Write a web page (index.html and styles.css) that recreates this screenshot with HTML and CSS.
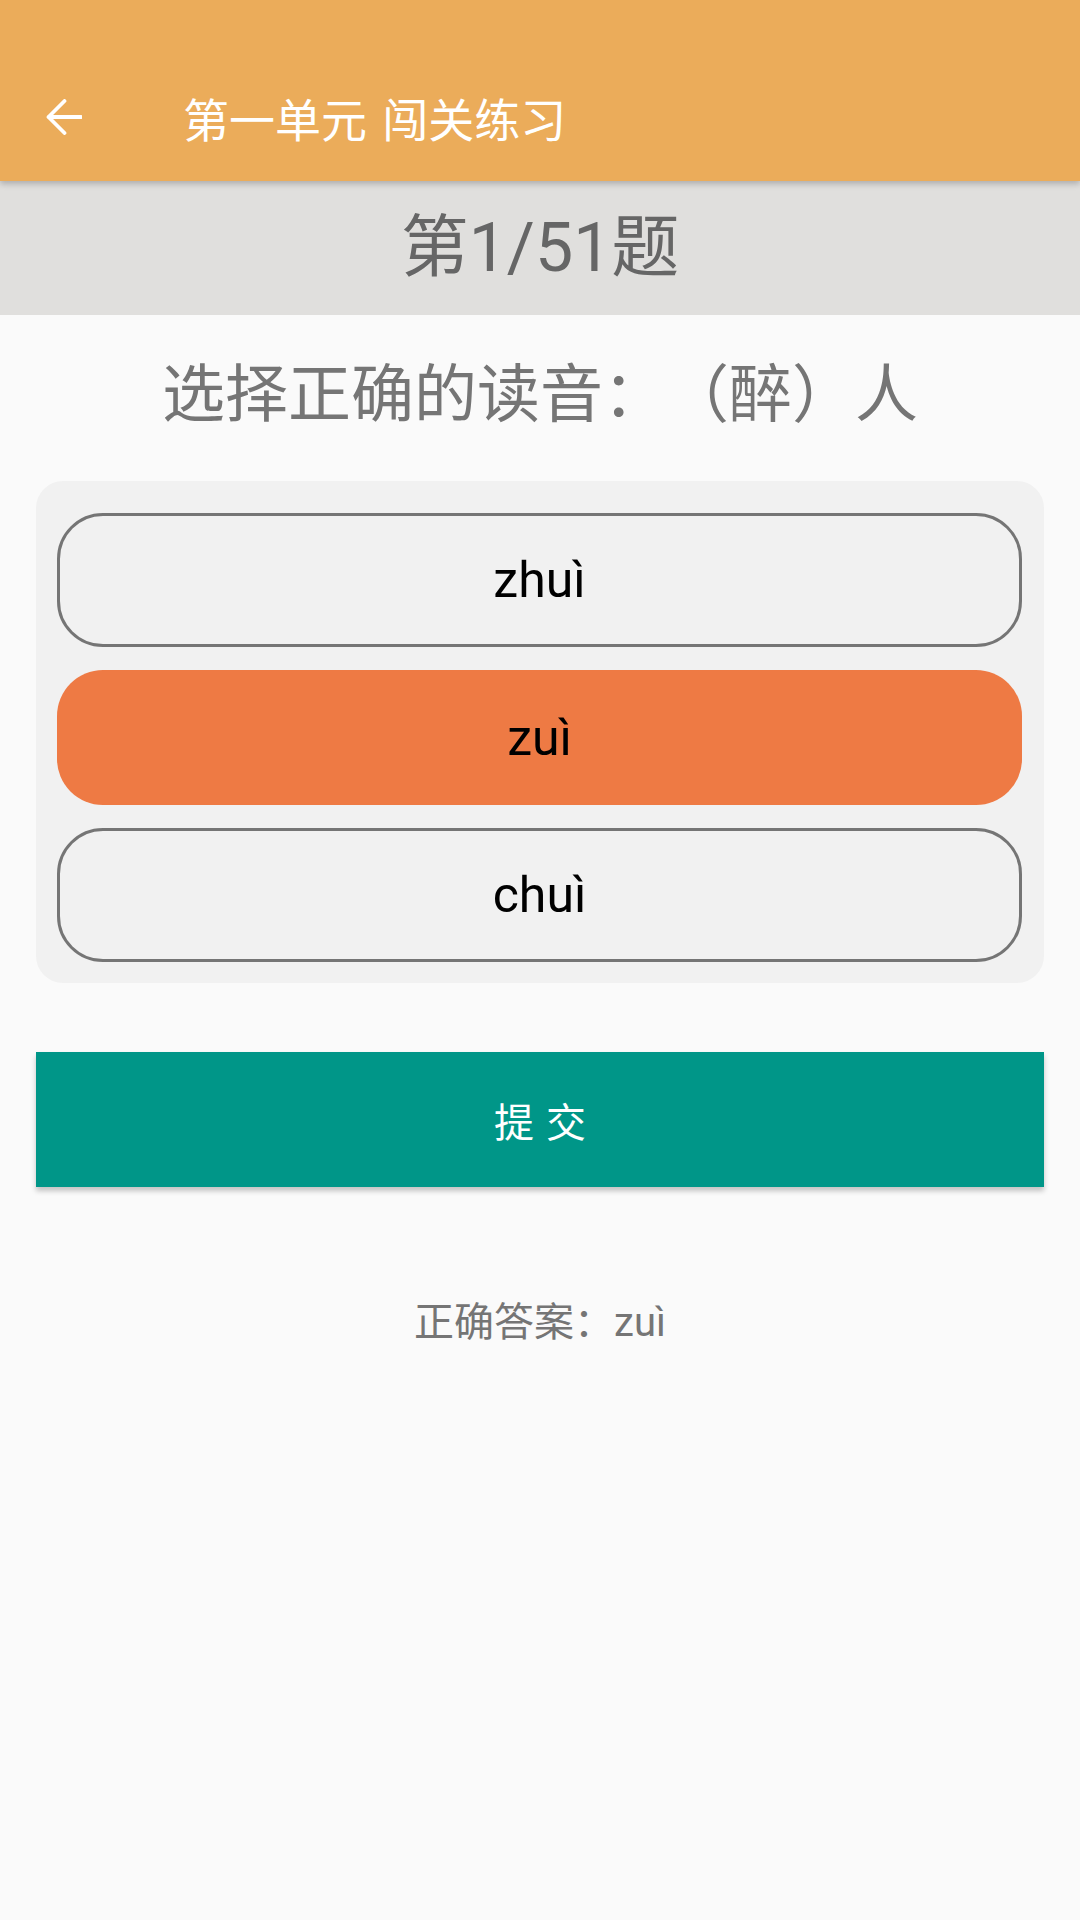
FILE: index.html
```html
<!DOCTYPE html>
<html lang="zh-CN">
<head>
<meta charset="utf-8">
<title>第一单元 闯关练习</title>
<link rel="stylesheet" href="styles.css">
</head>
<body>
<header class="appbar">
  <div class="toolbar">
    <svg class="back" viewBox="0 0 36 36" width="36" height="36" aria-hidden="true">
      <path d="M35 18 H2.5 M18.5 2 L2.5 18 L18.5 34" fill="none" stroke="#fff" stroke-width="3.8" stroke-linecap="round" stroke-linejoin="round"/>
    </svg>
    <h1 class="title">第一单元 闯关练习</h1>
  </div>
</header>
<div class="counter">第1/51题</div>
<main class="content">
  <p class="question">选择正确的读音：（醉）人</p>
  <div class="options">
    <div class="option">zhuì</div>
    <div class="option selected">zuì</div>
    <div class="option">chuì</div>
  </div>
  <div class="submit">提交</div>
  <p class="answer">正确答案：zuì</p>
</main>
</body>
</html>
```

FILE: styles.css
```css
* { box-sizing: border-box; }

html, body {
  margin: 0;
  padding: 0;
}

body {
  width: 1080px;
  min-height: 1920px;
  background: #fafafa;
  font-family: Roboto, "Noto Sans CJK SC", sans-serif;
  text-spacing-trim: space-all;
}

.appbar {
  position: relative;
  z-index: 2;
  height: 181px;
  padding-top: 53px;
  background: #ebac5a;
  box-shadow: 0 3px 6px rgba(0, 0, 0, 0.22);
}

.toolbar {
  height: 128px;
  display: flex;
  align-items: center;
  padding-left: 46px;
}

.back {
  display: block;
  flex: none;
}

.title {
  margin: 0 0 0 101px;
  font-family: "Noto Sans CJK SC", sans-serif;
  font-size: 46px;
  font-weight: 400;
  color: #ffffff;
  line-height: 1;
  word-spacing: 5px;
}

.counter {
  height: 134px;
  background: #e0dfdd;
  display: flex;
  align-items: center;
  justify-content: center;
  font-size: 68px;
  color: #666666;
  line-height: 1;
}

.content {
  display: flex;
  flex-direction: column;
  padding: 0 36px;
}

.question {
  margin: 35px 0 0;
  height: 90px;
  line-height: 90px;
  text-align: center;
  font-size: 63px;
  color: #757575;
  white-space: nowrap;
}

.options {
  margin-top: 41px;
  background: #f1f1f1;
  border-radius: 27px;
  padding: 32px 22px 21px 21px;
  display: flex;
  flex-direction: column;
  gap: 23px;
}

.option {
  height: 134px;
  border: 3px solid #757575;
  border-radius: 46px;
  display: flex;
  align-items: center;
  justify-content: center;
  font-size: 50px;
  color: #000000;
}

.option.selected {
  height: 135px;
  border: none;
  background: #ee7a44;
}

.submit {
  margin-top: 69px;
  height: 135px;
  background: #009688;
  box-shadow: 0 4px 5px rgba(0, 0, 0, 0.22);
  display: flex;
  align-items: center;
  justify-content: center;
  font-family: "Noto Sans CJK SC", sans-serif;
  font-size: 40px;
  letter-spacing: 12px;
  padding-left: 12px;
  color: #ffffff;
}

.answer {
  margin: 108px 0 0;
  height: 56px;
  line-height: 56px;
  text-align: center;
  font-size: 40px;
  color: #757575;
}
```
